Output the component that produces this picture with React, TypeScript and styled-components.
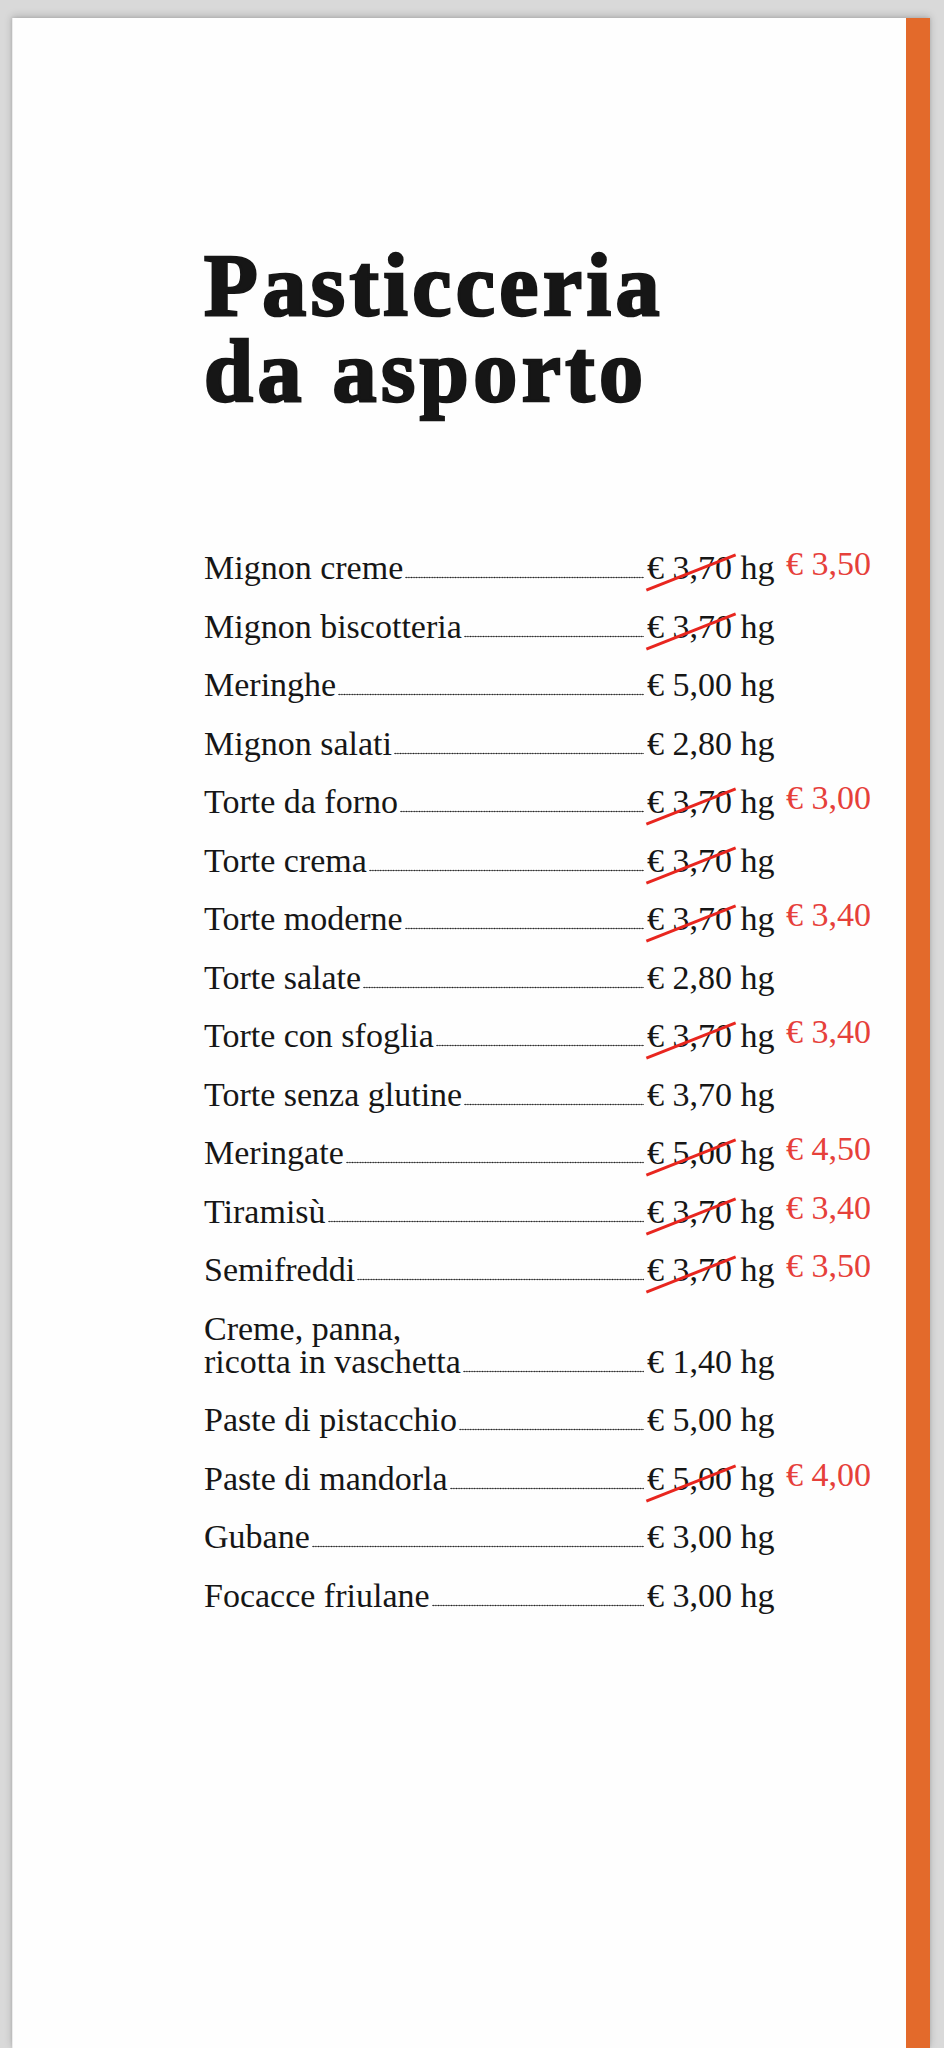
import React from "react";
import styled, { createGlobalStyle } from "styled-components";

const GlobalStyle = createGlobalStyle`
    html, body {
        margin: 0;
        padding: 0;
        background: #d9d9d9;
    }
    body {
        font-family: "Liberation Serif", "DejaVu Serif", serif;
        color: #161616;
    }
`;

const Page = styled.div`
    padding: 18px 14px 0 12px;
    min-height: 2048px;
    box-sizing: border-box;
    overflow: hidden;
`;

const Sheet = styled.div`
    display: flex;
    min-height: 2030px;
    background: #fefefe;
    border-left: 1px solid #ececec;
    box-shadow: 0 -2px 8px rgba(0, 0, 0, 0.18), 0 0 3px rgba(0, 0, 0, 0.12);
`;

const Content = styled.div`
    flex: 1;
    padding: 225px 0 0 191px;
`;

const SideBar = styled.div`
    width: 24px;
    background: #e36a2b;
`;

const Title = styled.h1`
    margin: 0;
    font-family: "Liberation Serif", serif;
    font-weight: 700;
    font-size: 88px;
    line-height: 86px;
    letter-spacing: 4.5px;
    -webkit-text-stroke: 2.6px #161616;
    color: #161616;
`;

const List = styled.div`
    margin-top: 136px;
    display: flex;
    flex-direction: column;
    gap: 25.5px;
    width: 672px;
`;

const Row = styled.div`
    display: flex;
    align-items: flex-end;
    font-size: 34px;
    line-height: 33px;
`;

const Name = styled.span`
    white-space: pre-line;
`;

const Leader = styled.span`
    flex: 1;
    height: 3px;
    margin: 0 3px 5px 2px;
    background-image: radial-gradient(circle, #222 0.75px, transparent 1.05px);
    background-size: 2.6px 3px;
    background-repeat: repeat-x;
    background-position: left bottom;
`;

const Price = styled.span<{ $struck?: boolean }>`
    position: relative;
    width: 139px;
    white-space: nowrap;

    &::after {
        content: "";
        display: ${(p) => (p.$struck ? "block" : "none")};
        position: absolute;
        left: -4px;
        top: 20px;
        width: 96px;
        height: 3px;
        background: #e8261f;
        transform: rotate(-21.5deg);
    }
`;

const NewPrice = styled.span`
    width: 90px;
    color: #e6403a;
    white-space: nowrap;
    position: relative;
    top: -4px;
`;

type Item = { name: string; price: string; struck?: boolean; now?: string };

const items: Item[] = [
    { name: "Mignon creme", price: "€ 3,70 hg", struck: true, now: "€ 3,50" },
    { name: "Mignon biscotteria", price: "€ 3,70 hg", struck: true },
    { name: "Meringhe", price: "€ 5,00 hg" },
    { name: "Mignon salati", price: "€ 2,80 hg" },
    { name: "Torte da forno", price: "€ 3,70 hg", struck: true, now: "€ 3,00" },
    { name: "Torte crema", price: "€ 3,70 hg", struck: true },
    { name: "Torte moderne", price: "€ 3,70 hg", struck: true, now: "€ 3,40" },
    { name: "Torte salate", price: "€ 2,80 hg" },
    { name: "Torte con sfoglia", price: "€ 3,70 hg", struck: true, now: "€ 3,40" },
    { name: "Torte senza glutine", price: "€ 3,70 hg" },
    { name: "Meringate", price: "€ 5,00 hg", struck: true, now: "€ 4,50" },
    { name: "Tiramisù", price: "€ 3,70 hg", struck: true, now: "€ 3,40" },
    { name: "Semifreddi", price: "€ 3,70 hg", struck: true, now: "€ 3,50" },
    { name: "Creme, panna,\nricotta in vaschetta", price: "€ 1,40 hg" },
    { name: "Paste di pistacchio", price: "€ 5,00 hg" },
    { name: "Paste di mandorla", price: "€ 5,00 hg", struck: true, now: "€ 4,00" },
    { name: "Gubane", price: "€ 3,00 hg" },
    { name: "Focacce friulane", price: "€ 3,00 hg" },
];

const App = () => {
    return (
        <Page>
            <GlobalStyle />
            <Sheet>
                <Content>
                    <Title>
                        Pasticceria
                        <br />
                        da asporto
                    </Title>
                    <List>
                        {items.map((item) => (
                            <Row key={item.name}>
                                <Name>{item.name}</Name>
                                <Leader />
                                <Price $struck={item.struck}>{item.price}</Price>
                                <NewPrice>{item.now}</NewPrice>
                            </Row>
                        ))}
                    </List>
                </Content>
                <SideBar />
            </Sheet>
        </Page>
    );
};

export default App;
